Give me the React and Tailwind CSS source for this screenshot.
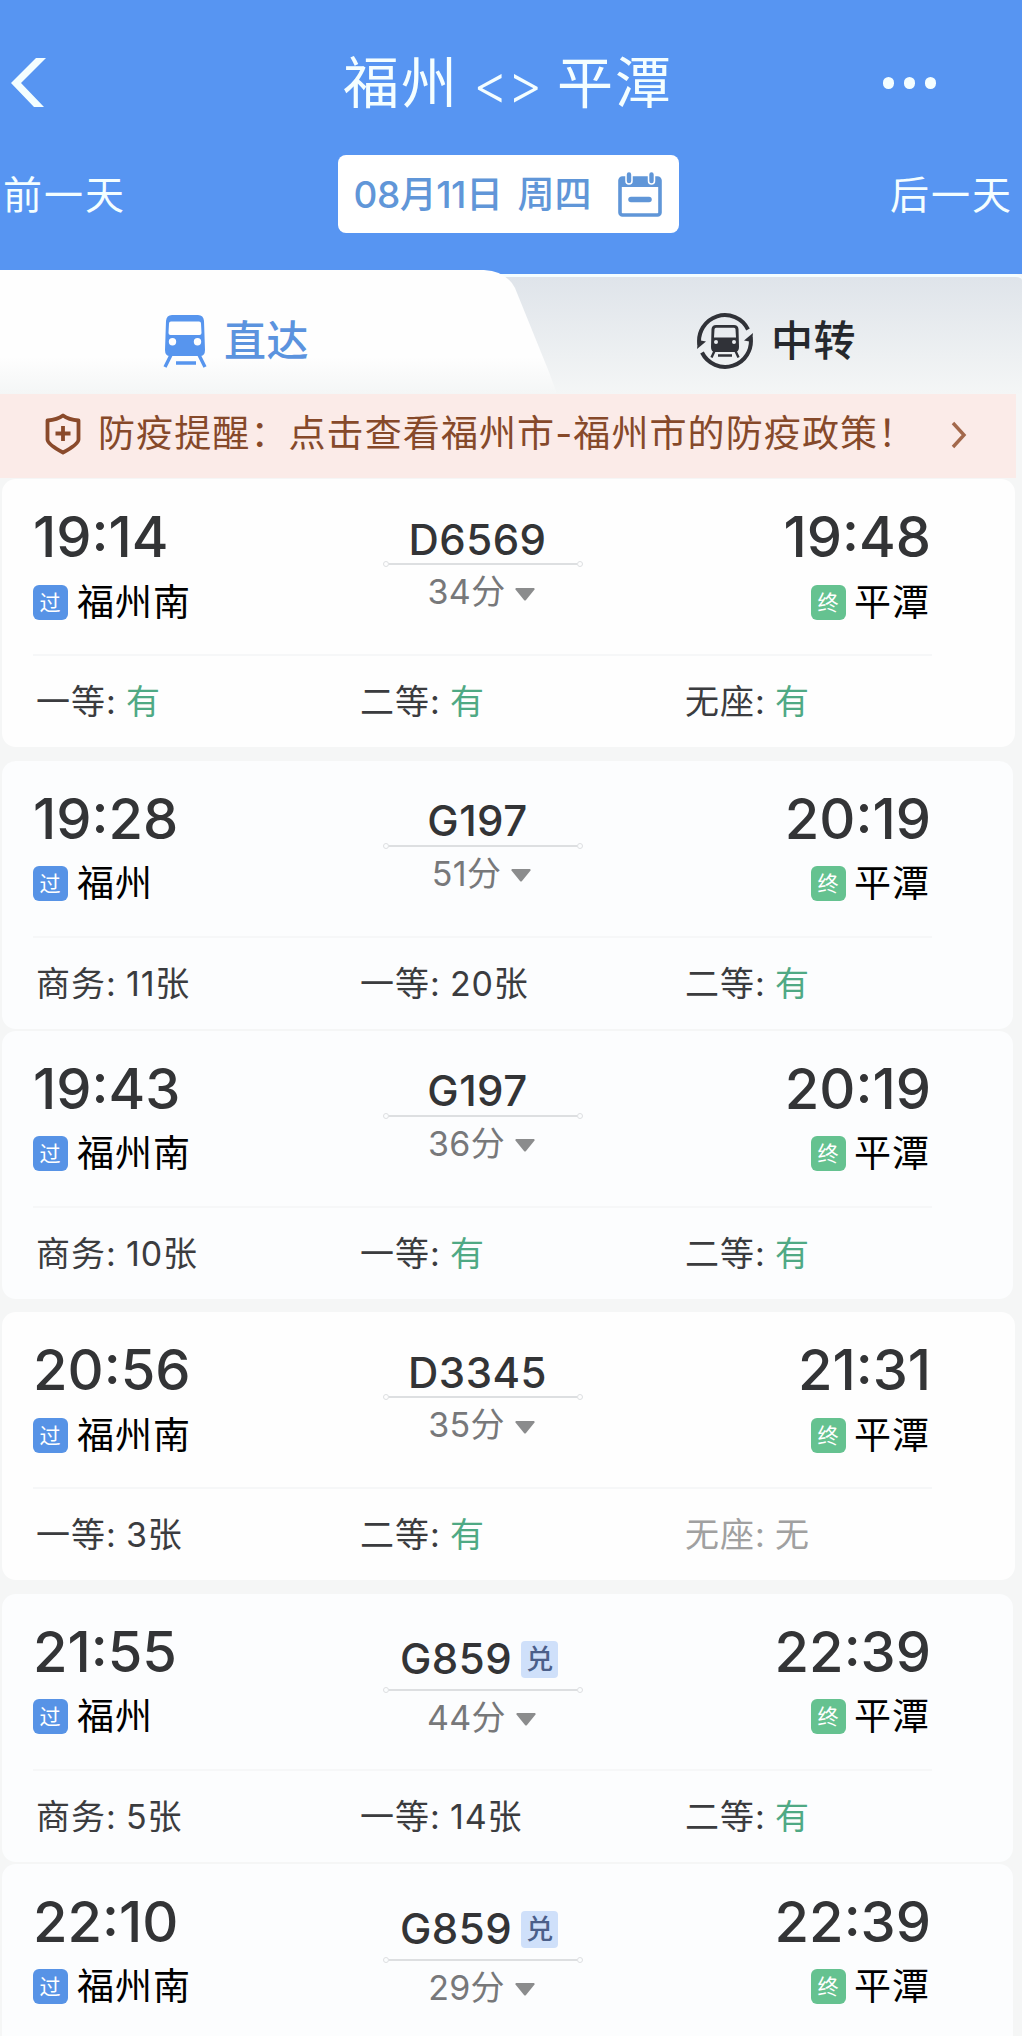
import React from 'react';
import clsx from 'clsx';

const trains = [
  {
    depart: '19:14', arrive: '19:48', from: '福州南', to: '平潭', code: 'D6569', duration: '34分',
    seats: [['一等', '有'], ['二等', '有'], ['无座', '有']],
  },
  {
    depart: '19:28', arrive: '20:19', from: '福州', to: '平潭', code: 'G197', duration: '51分', tinted: true,
    seats: [['商务', '11张'], ['一等', '20张'], ['二等', '有']],
  },
  {
    depart: '19:43', arrive: '20:19', from: '福州南', to: '平潭', code: 'G197', duration: '36分', tinted: true, joined: true,
    seats: [['商务', '10张'], ['一等', '有'], ['二等', '有']],
  },
  {
    depart: '20:56', arrive: '21:31', from: '福州南', to: '平潭', code: 'D3345', duration: '35分',
    seats: [['一等', '3张'], ['二等', '有'], ['无座', '无']],
  },
  {
    depart: '21:55', arrive: '22:39', from: '福州', to: '平潭', code: 'G859', duration: '44分', tinted: true, redeem: true,
    seats: [['商务', '5张'], ['一等', '14张'], ['二等', '有']],
  },
  {
    depart: '22:10', arrive: '22:39', from: '福州南', to: '平潭', code: 'G859', duration: '29分', tinted: true, redeem: true, joined: true,
    seats: [],
  },
];

function CalendarIcon() {
  return (
    <svg width="44" height="45" viewBox="0 0 44 45" fill="none">
      <rect x="2" y="6" width="40" height="37" rx="2.5" stroke="#6096d8" strokeWidth="3.6" />
      <path d="M2 5h40v10H2z" fill="#6096d8" />
      <path d="M11 3v6M33.500 3v6" stroke="#fff" strokeWidth="7.500" strokeLinecap="round" />
      <path d="M11 2.500v6.500M33.500 2.500v6.500" stroke="#6096d8" strokeWidth="4.400" strokeLinecap="round" />
      <path d="M13 27.500h18" stroke="#6096d8" strokeWidth="5.500" strokeLinecap="round" />
    </svg>
  );
}

function TrainIcon() {
  return (
    <svg width="44" height="54" viewBox="0 0 44 54">
      <path
        fillRule="evenodd"
        fill="#5795ee"
        d="M9 1h26q5.500 0 6 6l1 29q0 6-5 6H7q-5 0-5-6L3 7q.5-6 6-6zM8 7.500q-2 0-2 2l-.5 9.500q0 2 2 2h29q2 0 2-2l-.5-9.500q0-2-2-2zM9.500 24a3.700 3.700 0 100 7.400 3.700 3.700 0 000-7.400zm25 0a3.700 3.700 0 100 7.400 3.700 3.700 0 000-7.400z"
      />
      <path d="M8 41L2 53M36 41l6 12M13 49h20" stroke="#5795ee" strokeWidth="3.400" fill="none" />
    </svg>
  );
}

function TransferIcon() {
  return (
    <svg width="58" height="58" viewBox="0 0 58 58" fill="none">
      <path d="M3.400 33A25.800 25.800 0 0 1 52 17.500" stroke="#303238" strokeWidth="4" />
      <path d="M54.600 25A25.800 25.800 0 0 1 6 40.500" stroke="#303238" strokeWidth="4" />
      <path d="M1 37l1-9 8 1.500z" fill="#303238" />
      <path d="M57 21l-1 9-8-1.500z" fill="#303238" />
      <path
        fillRule="evenodd"
        fill="#303238"
        d="M20 13h18q4 0 4.500 4l.5 18q0 5-4 5H19q-4 0-4-5l.5-18q.5-4 4.500-4zM20 15.800q-1.500 0-1.500 1.500l-.5 8.200h22l-.5-8.200q0-1.500-1.500-1.500zM20 28a2 2 0 100 4 2 2 0 000-4zm18 0a2 2 0 100 4 2 2 0 000-4z"
      />
      <path d="M18.500 39l-3 6.500M39.500 39l3 6.500M22 43.500h14" stroke="#303238" strokeWidth="2.400" />
    </svg>
  );
}

function ShieldIcon() {
  return (
    <svg width="36" height="42" viewBox="0 0 36 42" fill="none" stroke="#8a4a2b">
      <path d="M18 2.500c4 3 9 4.500 15.500 5v19c0 4-8 9-15.500 13C10.500 35.500 2.500 30.500 2.500 26.500v-19C9 7 14 5.500 18 2.500z" strokeWidth="3.800" strokeLinejoin="round" />
      <path d="M18 13v15M10.500 20.500h15" strokeWidth="3.800" />
    </svg>
  );
}

function Header() {
  return (
    <header className="bg-[#5795f2] h-[274px] shrink-0 text-[#f4feff]">
      <div className="flex items-center h-[155px] pt-[11px] pl-[11px] pr-[86px]">
        <svg width="36" height="50" viewBox="0 0 36 50">
          <path d="M25 0h10L10 25l23 24H23L0 25z" fill="#f4feff" />
        </svg>
        <h1 className="flex-1 flex items-center text-[56px] leading-none font-normal pl-[296px] whitespace-pre">
          <span className="w-[130px] tracking-[2px]">福州</span>
          <span className="w-[84px] text-[54px] tracking-[-1px] font-light pt-[3px]">&lt;&gt;</span>
          <span className="tracking-[2px]">平潭</span>
        </h1>
        <div className="flex gap-[10px]">
          <span className="w-[11px] h-3 rounded-full bg-[#f4feff]" />
          <span className="w-[11px] h-3 rounded-full bg-[#f4feff]" />
          <span className="w-[11px] h-3 rounded-full bg-[#f4feff]" />
        </div>
      </div>
      <div className="flex items-center justify-between h-[78px] pl-[3px] pr-[10px]">
        <button className="w-[334px] text-left text-[39px] leading-none tracking-[2px]">前一天</button>
        <button className="w-[341px] h-[78px] flex items-center rounded-lg bg-white text-[#6096d8] text-[37px] leading-none font-medium pl-[16px]">
          <span className="w-[164px] text-left tracking-[-0.5px]">08月11日</span>
          <span className="w-[100px] text-left">周四</span>
          <CalendarIcon />
        </button>
        <button className="w-[334px] text-right text-[39px] leading-none tracking-[2px] -mr-[1px]">后一天</button>
      </div>
    </header>
  );
}

function Tabs() {
  return (
    <nav className="h-[120px] shrink-0 relative bg-gradient-to-b from-[#dfe4ea] to-[#f4f6f6] border-t-3 border-[#f4fdff] flex rounded-tr-md">
      {/* slanted background of the active tab, rises above the bar */}
      <svg className="absolute left-0 -top-[7px]" width="560" height="124" viewBox="0 0 560 124">
        <defs>
          <linearGradient id="tab" x1="0" y1="0" x2="0" y2="1">
            <stop offset="0.7" stopColor="#fefefe" />
            <stop offset="1" stopColor="#f4f6f6" />
          </linearGradient>
        </defs>
        <path d="M0 0h484q22 1 31 18l34 84 8 22H0z" fill="url(#tab)" />
      </svg>
      <button className="relative w-[511px] h-[128px] flex items-center pl-[163px] gap-[17px] text-[42px] leading-none font-medium tracking-[0.500px] text-[#5b93de]">
        <TrainIcon />
        直达
      </button>
      <button className="h-[128px] flex items-center pl-[185px] gap-[17px] text-[42px] leading-none font-medium tracking-[0.500px] text-[#25282d]">
        <TransferIcon />
        中转
      </button>
    </nav>
  );
}

function Notice() {
  return (
    <div className="h-[84px] shrink-0 bg-[#fbebe8] flex items-center pl-[45px] pr-[49px] mr-[6px] pb-[5px] text-[#86492a]">
      <ShieldIcon />
      <p className="pl-[17px] flex-1 text-[37px] leading-none tracking-[1.100px] whitespace-nowrap">
        防疫提醒：点击查看福州市-福州市的防疫政策！
      </p>
      <svg className="mt-[2px]" width="16" height="28" viewBox="0 0 16 28" fill="none">
        <path d="M2 2l11 12L2 26" stroke="#a3684b" strokeWidth="3.400" />
      </svg>
    </div>
  );
}

function StationTag({ label, end }) {
  return (
    <span
      className={clsx(
        'w-[35px] h-[35px] rounded-md flex items-center justify-center text-[21px] leading-none text-white',
        end ? 'bg-[#65c290]' : 'bg-[#5793e6]'
      )}
    >
      {label}
    </span>
  );
}

function Seat({ name, value }) {
  const soldOut = value === '无';
  return (
    <div className={clsx('flex text-[34px] leading-none', soldOut ? 'text-[#a0a0a0]' : 'text-[#3b3c3f]')}>
      <span className="w-[90px] tracking-[1px]">{name}:</span>
      <span className={clsx('tracking-[0.800px]', value === '有' && 'text-[#4fa984]')}>{value}</span>
    </div>
  );
}

function TrainCard({ train }) {
  return (
    <article
      className={clsx(
        'h-[268px] shrink-0 ml-[2px] rounded-[14px]',
        train.tinted ? 'bg-[#fcfdfe] mr-[9px]' : 'bg-[#fefefe] mr-[7px]',
        train.joined ? 'mt-[2px]' : 'mt-[13.500px] first:mt-0'
      )}
    >
      <div className="h-[177px] ml-[31px] w-[899px] border-b-2 border-[#f6f7f8] flex">
        <div className="w-[349px] pt-[30px]">
          <div className="text-[56px] leading-[57px] font-medium text-[#333436]">{train.depart}</div>
          <div className="flex items-center gap-[9px] mt-[18px] h-9 text-[37px] leading-none tracking-[1px] text-black">
            <StationTag label="过" />
            {train.from}
          </div>
        </div>

        <div className="w-[201px] flex flex-col items-center">
          <div
            className={clsx(
              'flex items-center gap-[9px] text-[42px] leading-none font-medium tracking-[0.500px] text-[#333436]',
              train.redeem ? 'h-[93px] pt-[38px] pr-[7px]' : 'h-[82px] pt-[39px] pr-[10px]'
            )}
          >
            {train.code}
            {train.redeem && (
              <span className="w-[37px] h-[37px] rounded bg-[#cfe0fa] text-[#4b5f8a] text-[27px] leading-none font-medium tracking-normal flex items-center justify-center">
                兑
              </span>
            )}
          </div>
          <div className="flex items-center w-[200px] h-[6px] shrink-0">
            <span className="w-[6px] h-[6px] rounded-full border-[1.500px] border-[#dddfe1]" />
            <span className="flex-1 h-[2px] bg-[#dddfe1]" />
            <span className="w-[6px] h-[6px] rounded-full border-[1.500px] border-[#dddfe1]" />
          </div>
          <div className="flex items-center gap-[10px] mt-[8px] pr-[2px] text-[34px] leading-none tracking-[0.300px] text-[#77787a]">
            {train.duration}
            <svg width="20" height="13" viewBox="0 0 20 13" className="mt-1">
              <path d="M1 0h18q1 .5.500 1.500L11 12q-1 1-2 0L.5 1.500Q0 .5 1 0z" fill="#8b8c8d" />
            </svg>
          </div>
        </div>

        <div className="flex-1 pt-[30px] pr-[2px] flex flex-col items-end">
          <div className="text-[56px] leading-[57px] font-medium text-[#333436] -mr-[1px]">{train.arrive}</div>
          <div className="flex items-center gap-[8px] mt-[18px] h-9 text-[37px] leading-none tracking-[1px] text-black">
            <StationTag label="终" end />
            {train.to}
          </div>
        </div>
      </div>

      {train.seats.length > 0 && (
        <div className="grid grid-cols-[324px_325px_auto] items-center h-[92px] pl-[34px]">
          {train.seats.map(([name, value]) => (
            <Seat key={name} name={name} value={value} />
          ))}
        </div>
      )}
    </article>
  );
}

export default function App() {
  return (
    <div className="w-[1022px] h-[2036px] overflow-hidden flex flex-col bg-[#f5f6f6] font-['Inter','Noto_Sans_CJK_SC',sans-serif]">
      <Header />
      <Tabs />
      <Notice />
      <main className="flex flex-col mt-[1px]">
        {trains.map((train) => (
          <TrainCard key={train.depart} train={train} />
        ))}
      </main>
    </div>
  );
}
